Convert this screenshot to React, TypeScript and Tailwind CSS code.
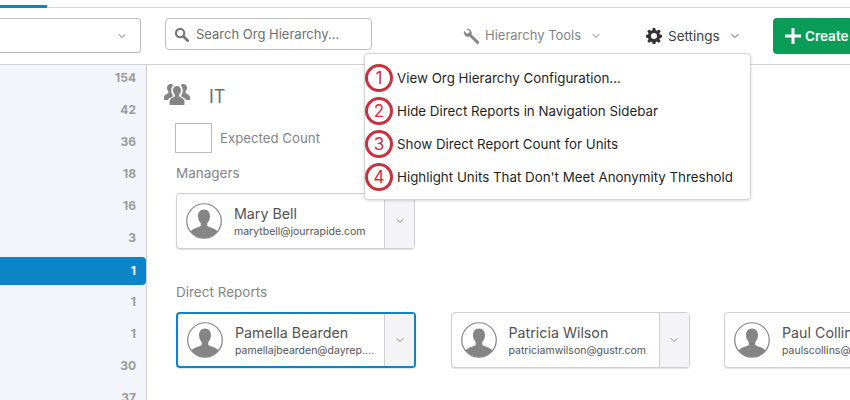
import React from 'react';
import { ChevronDown } from 'lucide-react';

const counts = ['154', '42', '36', '18', '16', '3', '1', '1', '1', '30', '37'];

const menuItems = [
  'View Org Hierarchy Configuration...',
  'Hide Direct Reports in Navigation Sidebar',
  'Show Direct Report Count for Units',
  "Highlight Units That Don't Meet Anonymity Threshold",
];

function Avatar() {
  return (
    <svg viewBox="0 0 36 36" className="w-9 h-9 shrink-0">
      <defs>
        <clipPath id="avatar-clip">
          <circle cx="18" cy="18" r="17" />
        </clipPath>
      </defs>
      <g clipPath="url(#avatar-clip)" fill="#858585">
        <path d="M18 6.500c-3.900 0-6 2.900-6 6.600 0 2.800 1 5.300 2.700 6.800v3.100c-1.200 1.100-5 1.900-7.500 3.200-2.300 1.200-3.500 3.300-3.500 5.800v4h28.600v-4c0-2.500-1.200-4.600-3.500-5.800-2.500-1.300-6.300-2.100-7.500-3.200v-3.100c1.700-1.500 2.700-4 2.700-6.800 0-3.700-2.100-6.600-6-6.600z" />
      </g>
      <circle cx="18" cy="18" r="17.250" fill="none" stroke="#858585" strokeWidth="1.200" />
    </svg>
  );
}

function PersonCard({ name, email, active }: { name: string; email: string; active?: boolean }) {
  return (
    <div
      className={`flex h-14 shrink-0 bg-white rounded-sm shadow-[0_1px_1px_rgba(0,0,0,0.12)] ${
        active ? 'w-[240px] border-2 border-[#0b85c7]' : 'w-[239px] border border-[#cfcfcf]'
      }`}
    >
      <div className="flex-1 min-w-0 flex items-center gap-3 pl-[9px]">
        <Avatar />
        <div className="min-w-0 pt-[2px] pr-[7px]">
          <div className="text-[14.25px] leading-5 text-[#525252] whitespace-nowrap">{name}</div>
          <div className="text-[10.5px] leading-4 text-[#525252] truncate">{email}</div>
        </div>
      </div>
      <div className="w-[30px] shrink-0 flex items-center justify-center bg-[#f4f4f6] border-l border-[#cfcfcf]">
        <ChevronDown className="w-3 h-3 text-[#858585]" />
      </div>
    </div>
  );
}

export default function App() {
  return (
    <div className="relative w-[850px] h-[400px] overflow-hidden bg-white font-['Inter',sans-serif]">
      <div className="h-2 pt-[5px] border-b border-[#d8d8d8]">
        <div className="w-[47px] h-[3px] bg-[#0b85c7]" />
      </div>

      <div className="h-[57px] border-b border-[#d0d0d0] flex items-start pt-[10px]">
        <div className="w-[141px] h-[35px] shrink-0 flex items-center justify-end pr-3 border border-l-0 border-[#bdbdbd] rounded-r-sm">
          <ChevronDown className="w-3 h-3 text-[#777]" />
        </div>
        <div className="ml-6 w-[207px] h-8 shrink-0 flex items-center gap-[7px] pl-2 pt-px border border-[#bdbdbd] rounded-sm text-[13px] text-[#6f6f6f]">
          <svg viewBox="0 0 16 16" className="w-[15px] h-[15px]" fill="none" stroke="#757575">
            <circle cx="6.500" cy="6.500" r="4.500" strokeWidth="2.200" />
            <path d="M10 10l4.500 4.500" strokeWidth="3" strokeLinecap="round" />
          </svg>
          Search Org Hierarchy...
        </div>
        <div className="ml-[91px] w-[183px] h-9 shrink-0 flex items-center text-[13px] text-[#858585]">
          <svg viewBox="0 0 18 18" className="w-[17px] h-[17px] mr-[5px]" fill="#858585">
            <path d="M3.200 1.200a4.600 4.600 0 0 1 5.900 5.600l7.400 7.300a1.400 1.400 0 0 1-2.200 2.200L6.900 9a4.600 4.600 0 0 1-5.800-6l3 3 2.300-.8.700-2.200z" />
          </svg>
          Hierarchy Tools
          <ChevronDown className="w-3 h-3 ml-[9px]" />
        </div>
        <div className="w-[127px] h-9 shrink-0 flex items-center text-[13.5px] text-[#404040]">
          <svg viewBox="0 0 16 16" className="w-4 h-4 mr-[6px]" fill="#333">
            <path
              fillRule="evenodd"
              d="M6.700 0h2.600l.4 2.200 1.300.6 1.900-1.300 1.800 1.800-1.300 1.900.6 1.300 2 .4v2.600l-2 .4-.6 1.300 1.300 1.900-1.800 1.800-1.900-1.300-1.300.6-.4 2.200H6.700l-.4-2.200-1.300-.6-1.900 1.300-1.800-1.800 1.300-1.900-.6-1.300-2-.4V6.900l2-.4.6-1.300-1.300-1.900 1.800-1.800L5 2.800l1.300-.6zM8 5a3 3 0 1 0 0 6 3 3 0 0 0 0-6z"
            />
          </svg>
          Settings
          <ChevronDown className="w-3 h-3 ml-[9px] text-[#555]" />
        </div>
        <div className="w-[90px] h-9 shrink-0 flex items-center gap-1 pl-3 rounded-l-sm bg-[#0a9d58] text-[13.5px] font-semibold text-white">
          <svg viewBox="0 0 16 16" className="w-4 h-4" fill="white">
            <path d="M6.500 0h3v6.500H16v3H9.500V16h-3V9.500H0v-3h6.500z" />
          </svg>
          Create
        </div>
      </div>

      <div className="flex">
        <aside className="w-[147px] h-[335px] shrink-0 overflow-hidden bg-[#f4f5fa] border-r border-[#d0d0d0]">
          <div className="-mt-[3px]">
            {counts.map((count, idx) => (
              <div
                key={idx}
                className={`pr-[10px] flex items-center justify-end text-xs font-bold ${
                  idx === 6 ? 'h-[28px] mt-[3px] mb-px bg-[#0b85c7] text-white rounded-r-sm' : 'h-8 text-[#9b9b9b]'
                }`}
              >
                {count}
              </div>
            ))}
          </div>
        </aside>

        <main className="flex-1 min-w-0 overflow-hidden pl-[29px] pt-[17px]">
          <div className="flex items-center h-[26px] -ml-[12px]">
            <svg viewBox="0 0 26 24" className="w-[26px] h-6" fill="#858585">
              <path d="M13 3c2.500 0 4 1.900 4 4.300 0 1.900-.8 3.500-1.800 4.400v1.800c1 .8 5.300 1.700 5.300 5.500v3H5.500v-3c0-3.800 4.300-4.700 5.300-5.500v-1.800C9.800 10.800 9 9.200 9 7.300 9 4.900 10.500 3 13 3z" />
              <path d="M6.500 1C4.500 1 3 2.600 3 4.800c0 1.600.7 3 1.500 3.700v1.500C3.700 10.700 0 11.500 0 14.500V17h3.800c.6-1.300 3.200-2.600 5-3.400v-1.200C7.800 11 7.300 9.200 7.300 7.300c0-2 .7-3.800 2-5C8.600 1.400 7.600 1 6.500 1z" />
              <path d="M19.500 1c2 0 3.500 1.600 3.500 3.800 0 1.600-.7 3-1.500 3.700v1.500c.8.700 4.500 1.500 4.500 4.500V17h-3.800c-.6-1.300-3.200-2.600-5-3.400v-1.200c1-1.400 1.500-3.200 1.500-5.100 0-2-.7-3.800-2-5 .7-.9 1.700-1.300 2.800-1.300z" />
            </svg>
            <span className="ml-[19px] mt-1 text-lg text-[#6f6f6f]">IT</span>
          </div>

          <div className="flex items-center gap-2 mt-[15px] -ml-px">
            <div className="w-[37px] h-[30px] border border-[#bdbdbd]" />
            <span className="pt-px text-[13.25px] text-[#858585]">Expected Count</span>
          </div>

          <div className="mt-[10px] text-[13.5px] leading-5 text-[#858585]">Managers</div>
          <div className="mt-[10px]">
            <PersonCard name="Mary Bell" email="marytbell@jourrapide.com" />
          </div>

          <div className="mt-[33px] text-[13.5px] leading-5 text-[#858585]">Direct Reports</div>
          <div className="flex gap-[34.5px] mt-[10px]">
            <PersonCard active name="Pamella Bearden" email="pamellajbearden@dayrep.com" />
            <PersonCard name="Patricia Wilson" email="patriciamwilson@gustr.com" />
            <PersonCard name="Paul Collins" email="paulscollins@gustr.com" />
          </div>
        </main>
      </div>

      <div className="absolute left-[364px] top-[53px] w-[387px] h-[147px] pt-2 bg-white border border-[#d4d4d4] rounded-sm shadow-[0_1px_3px_rgba(0,0,0,0.15)]">
        {menuItems.map((item, idx) => (
          <div key={idx} className="h-[33px] flex items-center gap-1 text-[13.35px] text-[#1f1f1f] whitespace-nowrap">
            <span className="w-7 h-7 -mt-px shrink-0 flex items-center justify-center rounded-full border-[3px] border-[#c9313f] bg-white text-[17px] leading-none text-[#c9313f]">
              {idx + 1}
            </span>
            {item}
          </div>
        ))}
      </div>
    </div>
  );
}
